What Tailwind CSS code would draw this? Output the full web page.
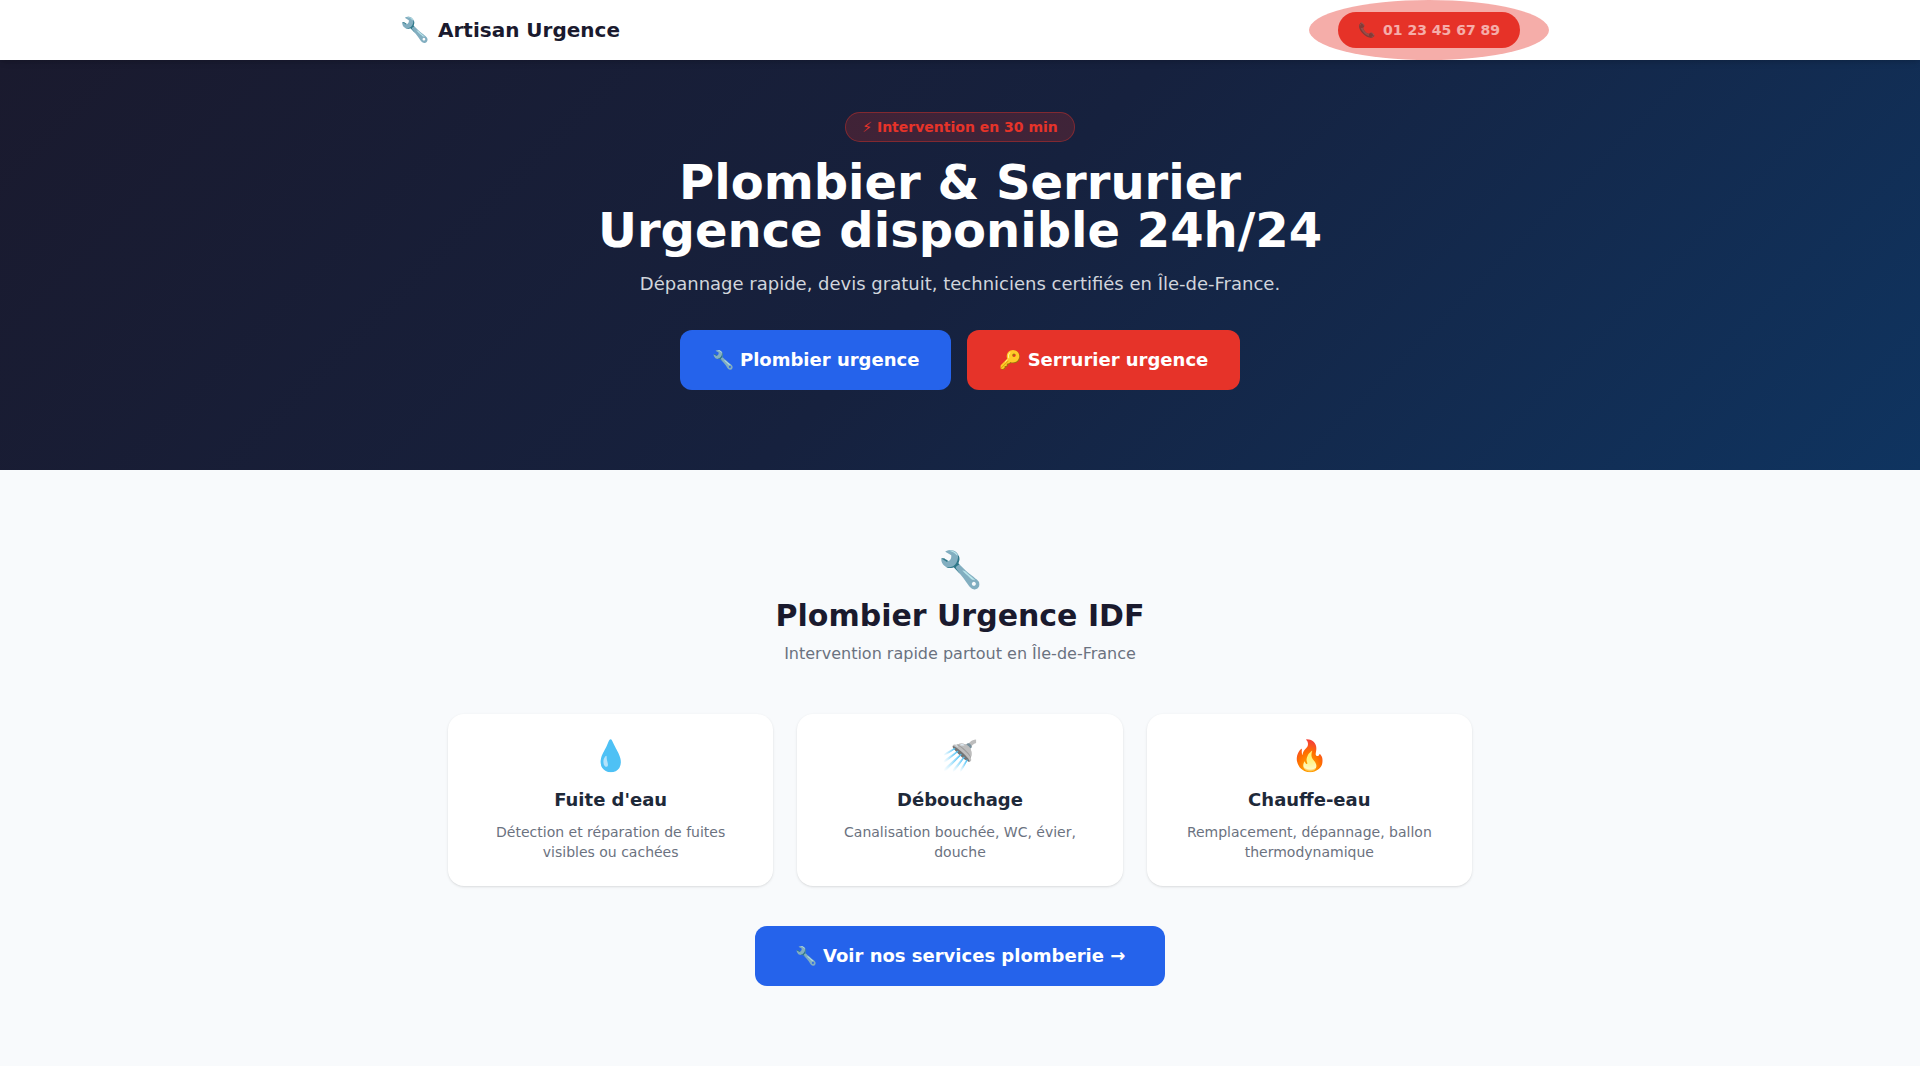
<!DOCTYPE html>
<html lang="fr">

<head>
    <meta charset="UTF-8">
    <meta name="viewport" content="width=device-width, initial-scale=1.0">
    <title>Artisan Urgence | Plombier &amp; Serrurier 24h/24</title>
    <script src="https://cdn.jsdelivr.net/npm/@tailwindcss/browser@4"></script>
</head>

<body class="bg-white text-gray-800 overflow-x-hidden" style="font-family: 'DejaVu Sans', sans-serif;">
    <header class="relative z-10 bg-white shadow-md">
        <div class="max-w-[1200px] mx-auto px-10 h-[60px] flex items-center justify-between">
            <a href="#" class="flex items-center gap-2 text-xl font-bold text-[#1a1a2e]"><span class="text-2xl">🔧</span> Artisan Urgence</a>
            <a href="tel:0123456789" class="relative flex items-center gap-2 bg-[#e63329] text-white rounded-full px-5 py-2 text-sm font-bold">
                <span>📞</span> 01 23 45 67 89
                <!-- pulse halo -->
                <span class="absolute -inset-x-[29px] -inset-y-3 rounded-[50%] bg-[#e63329]/40"></span>
            </a>
        </div>
    </header>

    <section class="bg-linear-[135deg,#1a1a2e_0%,#16213e_50%,#0f3460_100%] text-white text-center px-5 pt-[52px] pb-20">
        <span class="inline-block rounded-full border border-[#e63329]/40 bg-[#e63329]/20 text-[#e63329] px-4 py-1 text-sm font-bold">⚡ Intervention en 30 min</span>
        <h1 class="mt-4 text-5xl leading-12 font-bold">Plombier &amp; Serrurier<br>Urgence disponible 24h/24</h1>
        <p class="mt-4 text-lg text-gray-300">Dépannage rapide, devis gratuit, techniciens certifiés en Île-de-France.</p>
        <div class="mt-8 flex flex-wrap justify-center gap-4">
            <a href="#plombier" class="rounded-xl bg-[#2563eb] px-8 py-4 text-lg font-bold">🔧 Plombier urgence</a>
            <a href="#serrurier" class="rounded-xl bg-[#e63329] px-8 py-4 text-lg font-bold">🔑 Serrurier urgence</a>
        </div>
    </section>

    <section id="plombier" class="bg-[#f8fafc] text-center px-5 py-20">
        <div class="max-w-[1024px] mx-auto">
            <div class="text-4xl">🔧</div>
            <h2 class="mt-2 text-3xl font-bold text-[#1a1a2e]">Plombier Urgence IDF</h2>
            <p class="mt-2 text-[#6b7280]">Intervention rapide partout en Île-de-France</p>
            <div class="mt-12 grid md:grid-cols-3 gap-6">
                <div class="rounded-2xl bg-white shadow-sm p-6">
                    <div class="text-3xl">💧</div>
                    <h3 class="mt-3 text-lg font-bold">Fuite d'eau</h3>
                    <p class="mt-2 text-sm text-[#6b7280]">Détection et réparation de fuites visibles ou cachées</p>
                </div>
                <div class="rounded-2xl bg-white shadow-sm p-6">
                    <div class="text-3xl">🚿</div>
                    <h3 class="mt-3 text-lg font-bold">Débouchage</h3>
                    <p class="mt-2 text-sm text-[#6b7280]">Canalisation bouchée, WC, évier, douche</p>
                </div>
                <div class="rounded-2xl bg-white shadow-sm p-6">
                    <div class="text-3xl">🔥</div>
                    <h3 class="mt-3 text-lg font-bold">Chauffe-eau</h3>
                    <p class="mt-2 text-sm text-[#6b7280]">Remplacement, dépannage, ballon thermodynamique</p>
                </div>
            </div>
            <a href="#services" class="mt-10 inline-block rounded-xl bg-[#2563eb] text-white px-10 py-4 text-lg font-bold">🔧 Voir nos services plomberie →</a>
        </div>
    </section>
</body>

</html>
